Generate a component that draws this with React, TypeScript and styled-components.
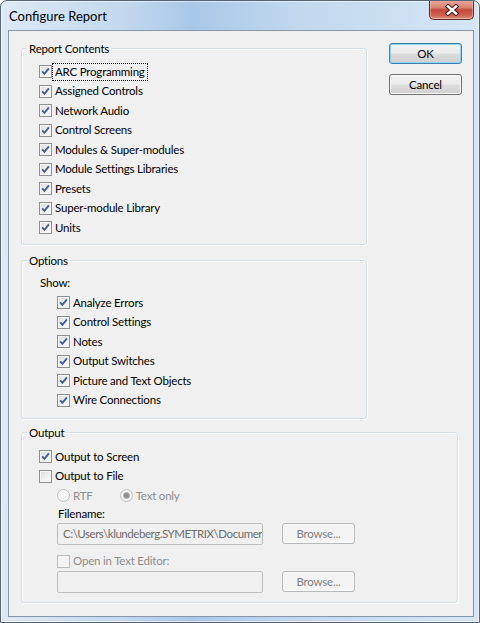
import React from "react";
import styled, { createGlobalStyle } from "styled-components";

const GlobalStyle = createGlobalStyle`
  html, body {
    margin: 0;
    padding: 0;
    background: #ffffff;
  }
  body {
    font-family: Lato, "Liberation Sans", sans-serif;
    font-size: 11.5px;
    letter-spacing: -0.2px;
    color: #000;
  }
`;

const Window = styled.div`
  width: 480px;
  height: 623px;
  box-sizing: border-box;
  border: 1px solid #56667a;
  border-radius: 7px 7px 0 0;
  background: linear-gradient(
    90deg,
    #dde9f5 0%,
    #c3d9ef 25%,
    #a9c8e7 40%,
    #c1d8ef 62%,
    #d6e6f6 100%
  );
  box-shadow: inset 0 0 0 1px rgba(255, 255, 255, 0.55);
  display: flex;
  flex-direction: column;
  overflow: hidden;
`;

const TitleBar = styled.div`
  height: 29px;
  flex: 0 0 29px;
  display: flex;
  justify-content: space-between;
  align-items: flex-start;
  padding-left: 8px;
`;

const Title = styled.div`
  margin-top: 7px;
  font-size: 13px;
  letter-spacing: 0;
  line-height: 16px;
  color: #000;
`;

const CloseButton = styled.div`
  width: 45px;
  height: 20px;
  margin-top: -1px;
  margin-right: 5px;
  box-sizing: border-box;
  border: 1px solid #5d2b26;
  border-top: none;
  border-radius: 0 0 5px 5px;
  background: linear-gradient(
    180deg,
    #e9a99a 0%,
    #d98272 40%,
    #c3473a 52%,
    #cf5f4f 80%,
    #e0927f 100%
  );
  box-shadow: inset 0 0 0 1px rgba(255, 220, 210, 0.45);
  display: flex;
  align-items: center;
  justify-content: center;
`;

const Client = styled.div`
  flex: 1;
  margin: 0 5px 5px 7px;
  border: 1px solid #8497ad;
  background: #f0f0f0;
  padding: 10px 0 0 12px;
  display: flex;
  flex-direction: column;
`;

const TopRow = styled.div`
  display: flex;
  align-items: flex-start;
`;

const GroupColumn = styled.div`
  display: flex;
  flex-direction: column;
  gap: 8px;
`;

const ButtonColumn = styled.div`
  margin: 2px 0 0 22px;
  display: flex;
  flex-direction: column;
  gap: 10px;
`;

const GroupBox = styled.fieldset<{ $width: number; $top?: number }>`
  width: ${(p) => p.$width}px;
  box-sizing: border-box;
  margin: ${(p) => p.$top ?? 0}px 0 0 0;
  padding: 0 5px;
  border: 1px solid #d5dfe5;
  border-radius: 3px;
  box-shadow: 1px 1px 0 #ffffff, inset 1px 1px 0 #ffffff;
`;

const Legend = styled.legend`
  padding: 0 2px;
  margin-left: 0;
  line-height: 15px;
`;

const GroupBody = styled.div<{ $top: number; $bottom: number }>`
  padding: ${(p) => p.$top}px 0 ${(p) => p.$bottom}px 12px;
  display: flex;
  flex-direction: column;
`;

const Indent = styled.div`
  margin-left: 18px;
  display: flex;
  flex-direction: column;
`;

const Row = styled.div<{ $h?: number; $top?: number }>`
  height: ${(p) => p.$h ?? 19.5}px;
  margin-top: ${(p) => p.$top ?? 0}px;
  display: flex;
  align-items: center;
  gap: 2px;
`;

const Caption = styled.span<{ $disabled?: boolean; $focused?: boolean }>`
  line-height: 14px;
  padding: 0 1px;
  color: ${(p) => (p.$disabled ? "#8d8d8d" : "#000")};
  outline: ${(p) => (p.$focused ? "1px dotted #000" : "none")};
  outline-offset: 1px;
  white-space: nowrap;
`;

const Box = styled.span<{ $disabled?: boolean }>`
  width: 13px;
  height: 13px;
  flex: 0 0 13px;
  box-sizing: border-box;
  border: 1px solid ${(p) => (p.$disabled ? "#bcbcbc" : "#8e8f8f")};
  background: ${(p) =>
    p.$disabled
      ? "#f4f4f4"
      : "linear-gradient(135deg, #dcdcdc 0%, #f0f0f0 55%, #fbfbfb 100%)"};
  box-shadow: inset 0 0 0 1px ${(p) => (p.$disabled ? "#f4f4f4" : "#f5f5f5")};
  display: flex;
  align-items: center;
  justify-content: center;
`;

const Radio = styled.span<{ $selected?: boolean }>`
  width: 13px;
  height: 13px;
  flex: 0 0 13px;
  box-sizing: border-box;
  border-radius: 50%;
  border: 1px solid #c2c2c2;
  background: radial-gradient(circle at 40% 35%, #ffffff 0%, #ececec 100%);
  display: flex;
  align-items: center;
  justify-content: center;
  &::after {
    content: "";
    display: ${(p) => (p.$selected ? "block" : "none")};
    width: 5px;
    height: 5px;
    border-radius: 50%;
    background: #8f8f8f;
    box-shadow: 0 0 0 1px #b8b8b8;
  }
`;

const RadioGroup = styled.div`
  display: flex;
  align-items: center;
  gap: 26px;
`;

const Option = styled.div`
  display: flex;
  align-items: center;
  gap: 2px;
`;

const FieldRow = styled.div<{ $top: number }>`
  margin-top: ${(p) => p.$top}px;
  display: flex;
  align-items: center;
  gap: 19px;
`;

const TextField = styled.div`
  width: 206px;
  height: 22px;
  box-sizing: border-box;
  border: 1px solid #bdbdbd;
  border-radius: 2px;
  background: #f0f0f0;
  padding-left: 5px;
  line-height: 20px;
  letter-spacing: -0.45px;
  color: #6d6d6d;
  white-space: nowrap;
  overflow: hidden;
`;

const PushButton = styled.div<{ $isDefault?: boolean; $disabled?: boolean }>`
  width: 73px;
  height: 21px;
  box-sizing: border-box;
  border-radius: 3px;
  border: 1px solid
    ${(p) => (p.$disabled ? "#b5b9bc" : p.$isDefault ? "#3c7fb1" : "#707070")};
  background: ${(p) =>
    p.$disabled
      ? "#f4f4f4"
      : "linear-gradient(180deg, #f2f2f2 0%, #ebebeb 48%, #dddddd 52%, #cfcfcf 100%)"};
  box-shadow: inset 0 0 0 1px
    ${(p) => (p.$disabled ? "#fbfbfb" : p.$isDefault ? "#8fd6f8" : "#fbfbfb")};
  color: ${(p) => (p.$disabled ? "#838383" : "#000")};
  display: flex;
  align-items: center;
  justify-content: center;
  line-height: 14px;
`;

const Check = ({ checked, disabled }: { checked?: boolean; disabled?: boolean }) => (
  <Box $disabled={disabled}>
    {checked && (
      <svg width="11" height="11" viewBox="0 0 11 11">
        <path
          d="M2.2 5.4 L4.4 7.8 L8.9 2.4"
          fill="none"
          stroke="#465d92"
          strokeWidth="1.9"
          strokeLinejoin="miter"
        />
      </svg>
    )}
  </Box>
);

const CheckRow = ({
  label,
  checked = true,
  disabled,
  focused,
  h,
  top,
}: {
  label: string;
  checked?: boolean;
  disabled?: boolean;
  focused?: boolean;
  h?: number;
  top?: number;
}) => (
  <Row $h={h} $top={top}>
    <Check checked={checked} disabled={disabled} />
    <Caption $disabled={disabled} $focused={focused}>
      {label}
    </Caption>
  </Row>
);

const reportItems = [
  "ARC Programming",
  "Assigned Controls",
  "Network Audio",
  "Control Screens",
  "Modules & Super-modules",
  "Module Settings Libraries",
  "Presets",
  "Super-module Library",
  "Units",
];

const optionItems = [
  "Analyze Errors",
  "Control Settings",
  "Notes",
  "Output Switches",
  "Picture and Text Objects",
  "Wire Connections",
];

export default function App() {
  return (
    <>
      <GlobalStyle />
      <Window>
        <TitleBar>
          <Title>Configure Report</Title>
          <CloseButton>
            <svg width="14" height="12" viewBox="0 0 14 12">
              <path
                d="M3 2.5 L11 9.5 M11 2.5 L3 9.5"
                stroke="#3a1a16"
                strokeWidth="4.4"
                strokeLinecap="square"
              />
              <path
                d="M3 2.5 L11 9.5 M11 2.5 L3 9.5"
                stroke="#ffffff"
                strokeWidth="2.4"
                strokeLinecap="square"
              />
            </svg>
          </CloseButton>
        </TitleBar>

        <Client>
          <TopRow>
            <GroupColumn>
              <GroupBox $width={346}>
                <Legend>Report Contents</Legend>
                <GroupBody $top={6} $bottom={6}>
                  {reportItems.map((item, i) => (
                    <CheckRow key={item} label={item} focused={i === 0} />
                  ))}
                </GroupBody>
              </GroupBox>

              <GroupBox $width={346}>
                <Legend>Options</Legend>
                <GroupBody $top={5} $bottom={8}>
                  <Row $h={20.5}>
                    <Caption>Show:</Caption>
                  </Row>
                  <Indent>
                    {optionItems.map((item) => (
                      <CheckRow key={item} label={item} />
                    ))}
                  </Indent>
                </GroupBody>
              </GroupBox>
            </GroupColumn>

            <ButtonColumn>
              <PushButton $isDefault>OK</PushButton>
              <PushButton>Cancel</PushButton>
            </ButtonColumn>
          </TopRow>

          <GroupBox $width={437} $top={6}>
            <Legend>Output</Legend>
            <GroupBody $top={7} $bottom={9}>
              <CheckRow label="Output to Screen" />
              <CheckRow label="Output to File" checked={false} />
              <Indent>
                <Row>
                  <RadioGroup>
                    <Option>
                      <Radio />
                      <Caption $disabled>RTF</Caption>
                    </Option>
                    <Option>
                      <Radio $selected />
                      <Caption $disabled>Text only</Caption>
                    </Option>
                  </RadioGroup>
                </Row>
                <Row $h={16}>
                  <Caption>Filename:</Caption>
                </Row>
                <FieldRow $top={1}>
                  <TextField>C:\Users\klundeberg.SYMETRIX\Documer</TextField>
                  <PushButton $disabled>Browse...</PushButton>
                </FieldRow>
                <CheckRow label="Open in Text Editor:" checked={false} disabled h={17} top={8} />
                <FieldRow $top={1}>
                  <TextField />
                  <PushButton $disabled>Browse...</PushButton>
                </FieldRow>
              </Indent>
            </GroupBody>
          </GroupBox>
        </Client>
      </Window>
    </>
  );
}
